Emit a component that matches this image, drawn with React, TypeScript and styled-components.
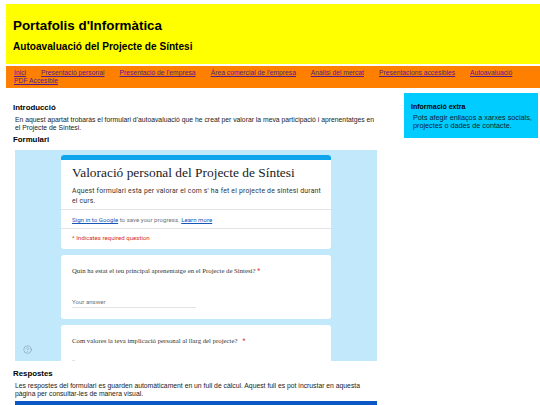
import React from "react";
import styled, { createGlobalStyle } from "styled-components";
import { CircleHelp } from "lucide-react";

const GlobalStyle = createGlobalStyle`
  html, body {
    margin: 0;
    padding: 0;
    height: 405px;
    overflow: hidden;
    background: #fff;
    font-family: "Liberation Sans", Arial, sans-serif;
    color: #000;
  }
`;

const Page = styled.div`
  width: 540px;
  height: 405px;
  padding: 4px 0 0 6px;
  box-sizing: border-box;
  overflow: hidden;
`;

const Header = styled.header`
  height: 60px;
  background: #ffff00;
  padding: 13px 0 0 7px;
  box-sizing: border-box;
`;

const Title = styled.h1`
  margin: 0;
  font-size: 13.4px;
  line-height: 17px;
  font-weight: 700;
`;

const Subtitle = styled.h2`
  margin: 5.5px 0 0;
  font-size: 10.1px;
  line-height: 13px;
  font-weight: 700;
`;

const Nav = styled.nav`
  height: 22px;
  margin-top: 2px;
  background: #ff7f00;
  padding: 3px 0 0 8px;
  box-sizing: border-box;
  font-size: 6.75px;
  line-height: 8px;
`;

const NavLink = styled.a`
  color: #551a8b;
  text-decoration: underline;
  white-space: nowrap;
  margin-right: 13.2px;
`;

const Columns = styled.div`
  display: flex;
  align-items: flex-start;
`;

const Main = styled.main`
  width: 371px;
  flex: none;
  padding: 15px 0 0 7px;
  box-sizing: border-box;
`;

const SectionTitle = styled.h3`
  margin: 0;
  font-size: 7.85px;
  line-height: 10px;
  font-weight: 700;
`;

const Paragraph = styled.p`
  margin: 3px 0 0 2px;
  font-size: 6.8px;
  line-height: 8px;
  color: #222;
`;

const FormTitle = styled(SectionTitle)`
  margin-top: 3px;
`;

const FormFrame = styled.div`
  position: relative;
  width: 362px;
  height: 211px;
  margin: 5px 0 0 2px;
  padding: 5px 46px 0;
  box-sizing: border-box;
  background: #c2e8fb;
  overflow: hidden;
`;

const HelpIcon = styled(CircleHelp)`
  position: absolute;
  left: 8px;
  bottom: 7px;
  width: 9px;
  height: 9px;
  color: #7d98a8;
`;

const Card = styled.section`
  background: #fff;
  border-radius: 3px;
  margin-bottom: 6px;
  overflow: hidden;
`;

const HeaderStripe = styled.div`
  height: 5px;
  background: #0ea5ec;
`;

const FormHeading = styled.div`
  padding: 4px 6px 0 11px;
  height: 50px;
  box-sizing: border-box;
  border-bottom: 1px solid #e2e5e8;
`;

const FormName = styled.div`
  font-family: "Liberation Serif", serif;
  font-size: 13.4px;
  line-height: 17px;
  color: #202124;
`;

const FormDescription = styled.div`
  margin-top: 6px;
  font-family: Roboto, sans-serif;
  font-size: 6.85px;
  line-height: 9.5px;
  color: #333;
  letter-spacing: 0.2px;
`;

const SignInRow = styled.div`
  height: 19px;
  padding: 5px 11px 0;
  box-sizing: border-box;
  border-bottom: 1px solid #e2e5e8;
  font-family: Roboto, sans-serif;
  font-size: 6.13px;
  line-height: 9px;
  color: #70757a;
`;

const FormLink = styled.span`
  color: #1a56b8;
  text-decoration: underline;
`;

const RequiredRow = styled.div`
  height: 20px;
  padding: 4px 11px 0;
  box-sizing: border-box;
  font-family: Roboto, sans-serif;
  font-size: 6.1px;
  line-height: 9px;
  color: #d93025;
`;

const QuestionCard = styled(Card)<{ $height: number }>`
  height: ${(p) => p.$height}px;
  padding: 11px 11px 0;
  box-sizing: border-box;
`;

const Question = styled.div`
  font-family: "Liberation Serif", serif;
  font-size: 6.75px;
  line-height: 9px;
  color: #333;
`;

const Star = styled.span`
  color: #d93025;
  font-family: Roboto, sans-serif;
`;

const AnswerLine = styled.div`
  width: 124px;
  margin-top: 21px;
  padding-bottom: 1px;
  border-bottom: 1px solid #e2e5e8;
  font-family: Roboto, sans-serif;
  font-size: 6.1px;
  line-height: 9px;
  color: #70757a;
`;

const Dots = styled.div`
  margin-top: 10px;
  font-family: Roboto, sans-serif;
  font-size: 6.1px;
  line-height: 6px;
  color: #70757a;
`;

const ResponseTitle = styled(SectionTitle)`
  margin-top: 8px;
`;

const SheetBar = styled.div`
  width: 362px;
  height: 10px;
  margin: 3px 0 0 2px;
  background: #0b57c5;
`;

const Aside = styled.aside`
  width: 134px;
  height: 45px;
  margin: 5px 0 0 27px;
  flex: none;
  background: #00ccff;
  padding: 9px 0 0 7px;
  box-sizing: border-box;
`;

const AsideTitle = styled.h4`
  margin: 0;
  font-size: 7px;
  line-height: 9px;
  font-weight: 700;
`;

const AsideText = styled.p`
  margin: 2.5px 0 0 2px;
  font-size: 7.25px;
  line-height: 8px;
  color: #123;
`;

const links = [
  "Inici",
  "Presentació personal",
  "Presentació de l'empresa",
  "Àrea comercial de l'empresa",
  "Anàlisi del mercat",
  "Presentacions accesibles",
  "Autoavaluació",
  "PDF Accesible",
];

export default function App(): JSX.Element {
  return (
    <Page>
      <GlobalStyle />
      <Header>
        <Title>Portafolis d'Informàtica</Title>
        <Subtitle>Autoavaluació del Projecte de Síntesi</Subtitle>
      </Header>
      <Nav>
        {links.map((link) => (
          <React.Fragment key={link}>
            <NavLink href="#">{link}</NavLink>{" "}
          </React.Fragment>
        ))}
      </Nav>
      <Columns>
        <Main>
          <SectionTitle>Introducció</SectionTitle>
          <Paragraph>
            En aquest apartat trobaràs el formulari d'autoavaluació que he creat per valorar la
            meva participació i aprenentatges en el Projecte de Síntesi.
          </Paragraph>
          <FormTitle>Formulari</FormTitle>
          <FormFrame>
            <Card>
              <HeaderStripe />
              <FormHeading>
                <FormName>Valoració personal del Projecte de Síntesi</FormName>
                <FormDescription>
                  Aquest formulari esta per valorar el com s' ha fet el projecte de sintesi durant
                  el curs.
                </FormDescription>
              </FormHeading>
              <SignInRow>
                <FormLink>Sign in to Google</FormLink> to save your progress.{" "}
                <FormLink>Learn more</FormLink>
              </SignInRow>
              <RequiredRow>* Indicates required question</RequiredRow>
            </Card>
            <QuestionCard $height={64}>
              <Question>
                Quin ha estat el teu principal aprenentatge en el Projecte de Síntesi? <Star>*</Star>
              </Question>
              <AnswerLine>Your answer</AnswerLine>
            </QuestionCard>
            <QuestionCard $height={60}>
              <Question>
                Com valores la teva implicació personal al llarg del projecte? &nbsp;&nbsp;<Star>*</Star>
              </Question>
              <Dots>..</Dots>
            </QuestionCard>
            <HelpIcon strokeWidth={1.5} />
          </FormFrame>
          <ResponseTitle>Respostes</ResponseTitle>
          <Paragraph>
            Les respostes del formulari es guarden automàticament en un full de càlcul. Aquest full
            es pot incrustar en aquesta pàgina per consultar-les de manera visual.
          </Paragraph>
          <SheetBar />
        </Main>
        <Aside>
          <AsideTitle>Informació extra</AsideTitle>
          <AsideText>
            Pots afegir enllaços a xarxes socials,
            <br />
            projectes o dades de contacte.
          </AsideText>
        </Aside>
      </Columns>
    </Page>
  );
}
